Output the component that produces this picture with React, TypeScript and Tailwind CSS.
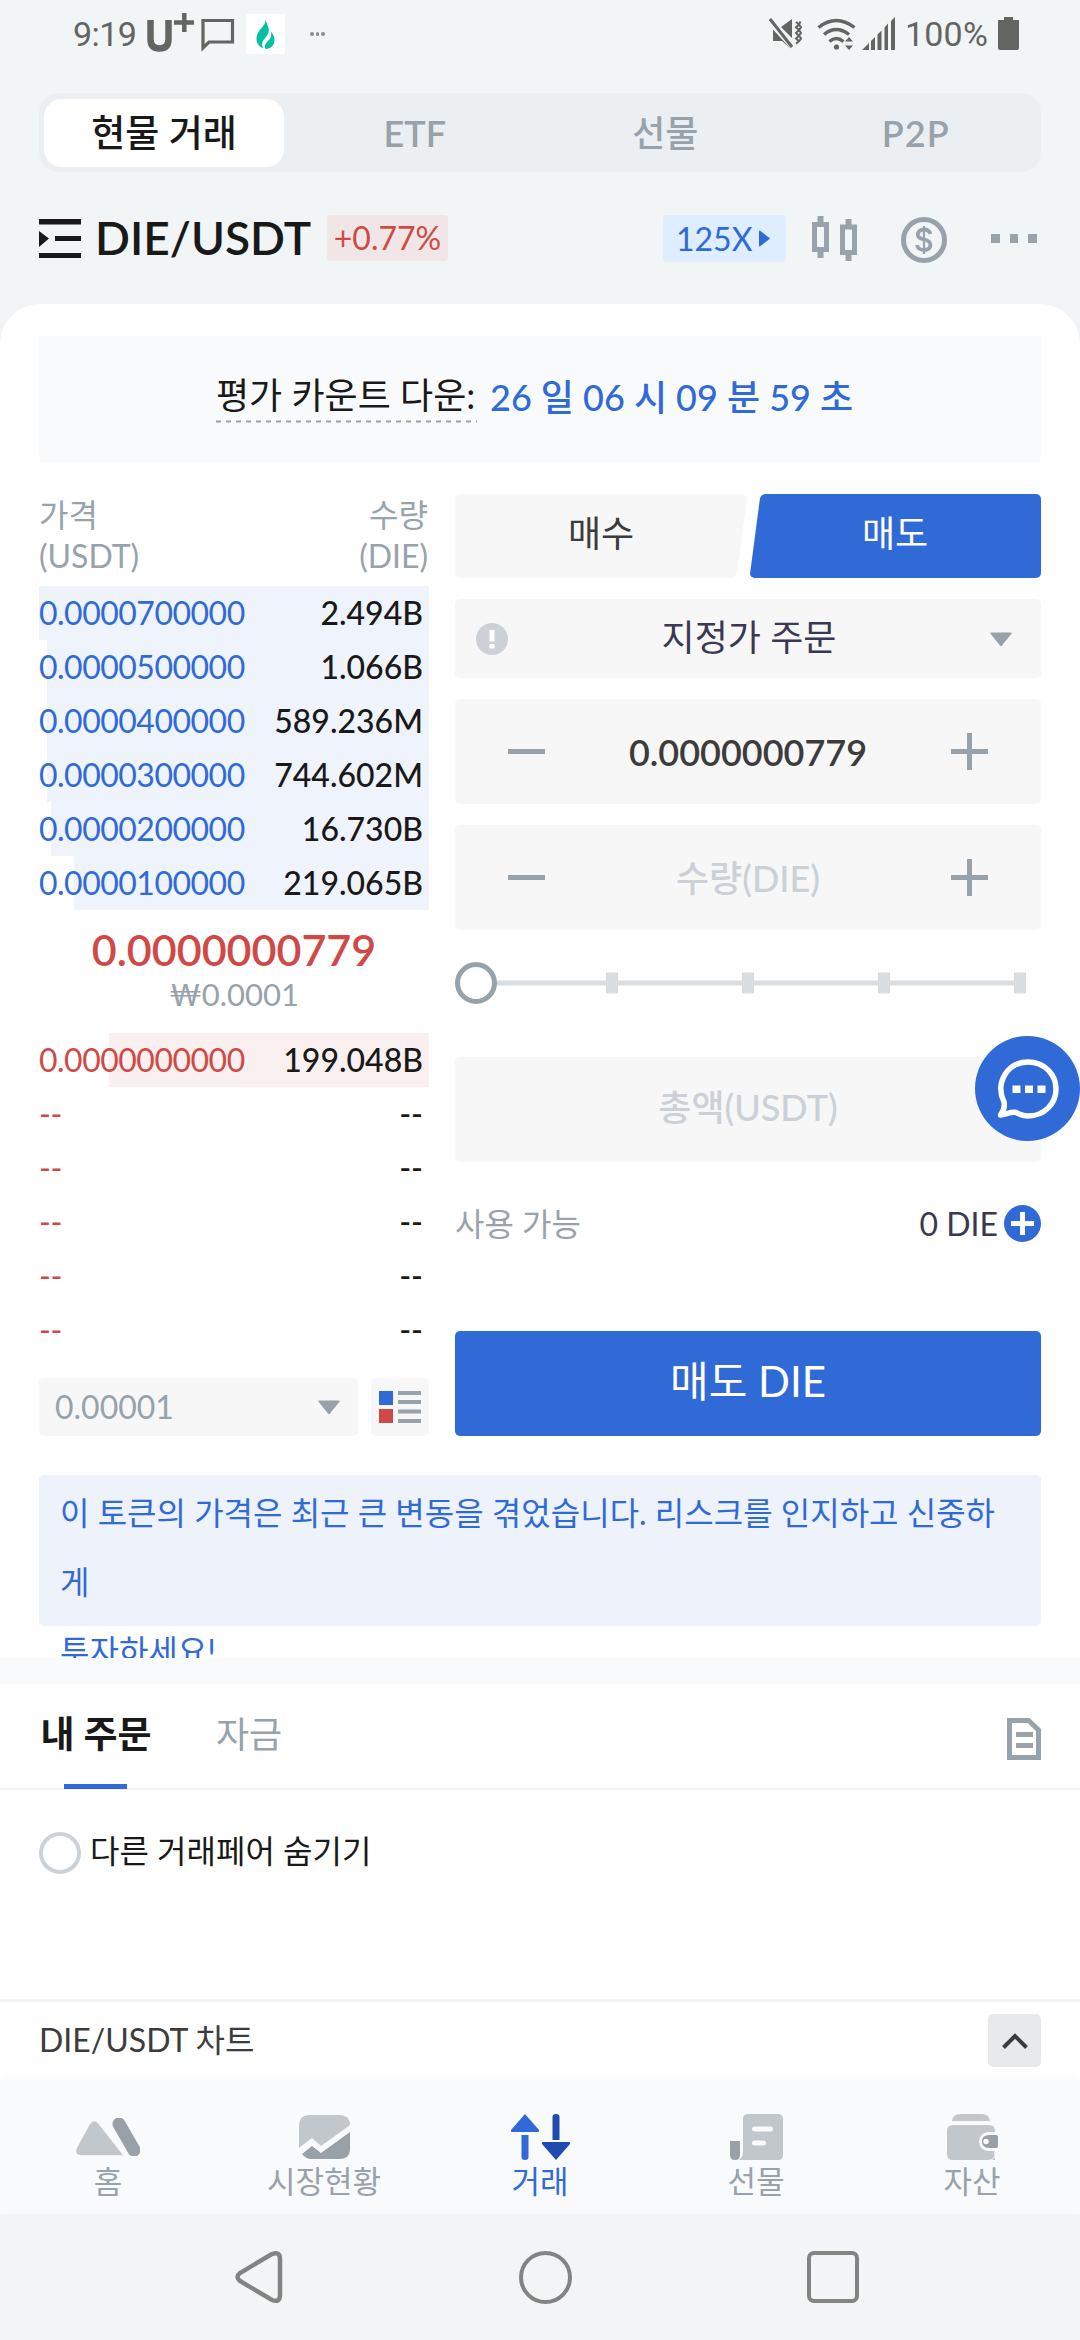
import React from 'react';

interface BookRow {
  price: string;
  amount: string;
  left: number;
}

const asks: BookRow[] = [
  { price: '0.0000700000', amount: '2.494B', left: 0 },
  { price: '0.0000500000', amount: '1.066B', left: 8 },
  { price: '0.0000400000', amount: '589.236M', left: 8 },
  { price: '0.0000300000', amount: '744.602M', left: 8 },
  { price: '0.0000200000', amount: '16.730B', left: 12 },
  { price: '0.0000100000', amount: '219.065B', left: 35 },
];

const bids: BookRow[] = [
  { price: '0.0000000000', amount: '199.048B', left: 70 },
  { price: '--', amount: '--', left: 390 },
  { price: '--', amount: '--', left: 390 },
  { price: '--', amount: '--', left: 390 },
  { price: '--', amount: '--', left: 390 },
  { price: '--', amount: '--', left: 390 },
];

const StatusBar: React.FC = () => (
  <div className="flex h-[93px] items-start justify-between pl-[73px] pr-[61px] pt-3 font-['Roboto',sans-serif] text-[34px] leading-[44px] text-[#636563]">
    <div className="flex items-start">
      <span className="w-[74px] tracking-[-0.6px]">9:19</span>
      <svg width="48" height="44" viewBox="0 0 48 44" fill="none" stroke="#636563">
        <path d="M3.5 8v19q0 9.500 9 9.500t9-9.500V8" strokeWidth="6.500" />
        <path d="M27 10.500h20M37.300 1v19" strokeWidth="4.500" />
      </svg>
      <svg className="ml-[6px]" width="34" height="44" viewBox="0 0 34 44" fill="none" stroke="#636563" strokeWidth="3.200">
        <path d="M2 8.500h29.500v21.500H8l-6 6z" />
      </svg>
      <div className="ml-[11px] mt-[2px] flex h-10 w-[39px] items-center justify-center bg-white">
        <svg width="19" height="29" viewBox="0 0 19 29" fill="#00c2a2">
          <path d="M9.500 0C10 6 1 10 .5 18c-.3 5 2.500 8.500 6.500 10.200C5 23 7 20 10 17c2.500-3 4-7 1.500-11.500C11 3.500 10.200 1.500 9.500 0z" />
          <path d="M15 11.500c1 5-1 8-4 10.500-2 2-2.600 4.500-1.600 7C15 28.800 18.500 25 18.500 20c0-3.500-1.500-6-3.500-8.500z" />
        </svg>
      </div>
      <div className="ml-[25px] mt-[20px] flex gap-[2px]">
        <i className="size-[3.500px] rounded-full bg-[#8a8c8b]" />
        <i className="size-[3.500px] rounded-full bg-[#8a8c8b]" />
        <i className="size-[3.500px] rounded-full bg-[#8a8c8b]" />
      </div>
    </div>
    <div className="flex items-start">
      <svg width="34" height="44" viewBox="0 0 34 44" fill="#636563">
        <path d="M4 17.500v11.500h9L22 37zM12 15l11-8v19z" />
        <path d="M1 7l22 28" stroke="#636563" strokeWidth="3" />
        <path d="M27 10l3 2.500-3 2.800 3 2.800-3 2.800 3 2.800-3 2.800 3 2.800-3 2.500M31.500 9.500l-1.500 3 2 2.800-2 2.800 2 2.800-2 2.800 2 2.800-2 2.800" fill="none" stroke="#636563" strokeWidth="2" />
      </svg>
      <svg className="ml-[14px]" width="40" height="44" viewBox="0 0 40 44" fill="none" stroke="#636563" strokeWidth="3.400">
        <path d="M1.500 15.500q17.500-14 36 0M7 22.500q12-10 25 0M12.500 29.500q6.500-6 14 0" />
        <circle cx="19.500" cy="35" r="2.600" fill="#636563" stroke="none" />
        <path d="M28 29.500l4-4.500 4 4.500zM28 33.500l4 4.500 4-4.500z" fill="#636563" stroke="none" />
      </svg>
      <svg className="ml-[5px]" width="34" height="44" viewBox="0 0 34 44" fill="#636563">
        <path d="M0 38l7-7v7zM9 29l4-4v13H9zM15.500 22.500l4-4V38h-4zM22.500 15.500l3.500-4V38h-3.500zM29 9l4-4v33h-4z" />
      </svg>
      <span className="ml-[9px] w-[93px] tracking-[0.2px]">100%</span>
      <svg width="21" height="44" viewBox="0 0 21 44" fill="#636563">
        <path d="M6 5h9v3h6v28q0 2-2 2H2q-2 0-2-2V8h6z" />
      </svg>
    </div>
  </div>
);

const MarketTabs: React.FC = () => (
  <div className="mx-[39px] grid h-[79px] grid-cols-4 items-center rounded-[20px] bg-[#ebeff2] text-center text-[36px] font-semibold leading-[68px] text-[#98a2ab]">
    <div className="ml-[5px] h-[68px] w-[240px] rounded-[18px] bg-white text-[37px] font-medium text-[#191919]">현물 거래</div>
    <div>ETF</div>
    <div className="font-medium">선물</div>
    <div className="tracking-[1px]">P2P</div>
  </div>
);

const PairHeader: React.FC = () => (
  <div className="flex h-[132px] items-start px-[39px] pt-[43px]">
    <svg className="mt-1" width="42" height="40" viewBox="0 0 42 40" fill="#191919">
      <path d="M0 0h42v5.500H0zM16 17h26v5H16zM0 34h42v5H0zM0 12l10 7.500L0 28z" />
    </svg>
    <h1 className="ml-[14px] w-[232px] whitespace-nowrap text-[46px] font-semibold leading-[46px] tracking-[0px] text-[#191919]">DIE/USDT</h1>
    <div className="h-[46px] w-[121px] rounded bg-[#f0e6e6] text-center text-[32px] leading-[46px] text-[#cf4a46]">+0.77%</div>
    <div className="ml-[215px] flex h-[47px] w-[123px] items-center rounded bg-[#deedff] pl-[13px] text-[32px] leading-[46px] text-[#306ad6]">
      <span className="w-[83px]">125X</span>
      <svg width="11" height="17" viewBox="0 0 11 17" fill="currentColor">
        <path d="M0 1.500Q0 0 1.500 1l9 7q.6.500 0 1l-9 7Q0 17 0 15.500z" />
      </svg>
    </div>
    <svg className="ml-[26px] mt-[1px]" width="46" height="46" viewBox="0 0 46 46" fill="none" stroke="#98a2ab" strokeWidth="5">
      <path d="M2.500 8.500h12v25h-12zM30.500 11h12v25.500h-12z" />
      <path d="M8.500 0v7M8.500 35v7M36.500 3v7M36.500 38v7" strokeWidth="6" />
    </svg>
    <svg className="ml-[43px] mt-[2px]" width="46" height="46" viewBox="0 0 46 46" fill="none" stroke="#98a2ab">
      <circle cx="23" cy="23" r="20.500" strokeWidth="5" />
      <path d="M29.500 17q-1.500-4.500-6.500-4.500t-6.300 4.700q0 4 6.300 5.300t6.500 5.500q-.5 5-6.500 5t-7-5" strokeWidth="3.800" />
      <path d="M23 9v28" strokeWidth="2.200" />
    </svg>
    <div className="ml-[44px] mt-[19px] flex gap-[10px]">
      <i className="size-[8.500px] bg-[#98a2ab]" />
      <i className="size-[8.500px] bg-[#98a2ab]" />
      <i className="size-[8.500px] bg-[#98a2ab]" />
    </div>
  </div>
);

const Countdown: React.FC = () => (
  <div className="mx-[39px] mt-8 flex h-[126px] justify-center rounded bg-[#f9fafc] pt-[34px] text-[36px] leading-[50px]">
    <div className="h-[52px] w-[261px] whitespace-nowrap text-[#191919]">
      평가 카운트 다운:
      <svg className="block" width="261" height="3" viewBox="0 0 261 3">
        <path d="M0 1.500h261" stroke="#98a2ab" strokeWidth="2" strokeDasharray="5 5" />
      </svg>
    </div>
    <div className="ml-[13px] mt-[2px] w-[374px] whitespace-nowrap font-medium text-[#306ad6]">26 일 06 시 09 분 59 초</div>
  </div>
);

const OrderBookRow: React.FC<{ row: BookRow; side: 'ask' | 'bid' }> = ({ row, side }) => (
  <div className="relative flex h-[54px] justify-between pr-[6px] text-[32px] leading-[54px]">
    <div
      className={side === 'ask' ? 'absolute inset-y-0 right-0 bg-[#eff3fc]' : 'absolute inset-y-0 right-0 bg-[#fbf0f0]'}
      style={{ left: row.left }}
    />
    <span className={side === 'ask' ? 'relative tracking-[-0.5px] text-[#306ad6]' : 'relative tracking-[-0.5px] text-[#cf4a46]'}>
      {row.price}
    </span>
    <span className="relative font-medium text-[#191919]">{row.amount}</span>
  </div>
);

const OrderBook: React.FC = () => (
  <div className="w-[390px]">
    <div className="flex h-[92px] justify-between pr-[1px] text-[32px] leading-[41px] text-[#98a2ab]">
      <div>가격<br />(USDT)</div>
      <div className="text-right">수량<br />(DIE)</div>
    </div>
    {asks.map((row) => (
      <OrderBookRow key={row.price} row={row} side="ask" />
    ))}
    <div className="flex h-[123px] flex-col items-center pt-[14px]">
      <div className="text-[43px] font-semibold leading-[52px] text-[#cf4a46]">0.0000000779</div>
      <div className="text-[31px] leading-9 text-[#98a2ab]">₩0.0001</div>
    </div>
    {bids.map((row, index) => (
      <OrderBookRow key={index} row={row} side="bid" />
    ))}
    <div className="mt-[21px] flex h-[58px] gap-[13px]">
      <div className="flex w-[319px] items-center justify-between rounded-[5px] bg-[#f7f7f7] pl-4 pr-[18px] text-[32px] leading-[54px] text-[#98a2ab]">
        0.00001
        <Caret />
      </div>
      <div className="flex w-[58px] items-center justify-center rounded-[5px] bg-[#f7f7f7]">
        <svg width="42" height="32" viewBox="0 0 42 32">
          <path d="M0 0h14v14H0z" fill="#306ad6" />
          <path d="M0 18h14v14H0z" fill="#cf4a46" />
          <path d="M19 0h23v4H19zM19 9h23v4H19zM19 18.500h23v4H19zM19 28h23v4H19z" fill="#98a2ab" />
        </svg>
      </div>
    </div>
  </div>
);

const Caret: React.FC = () => (
  <svg width="22" height="16" viewBox="0 0 22 16" fill="#98a2ab">
    <path d="M1 1.500h20q1.200 0 .5 1.200L12 14.500q-1 1-2 0L.5 2.700Q0 1.500 1 1.500z" />
  </svg>
);

const Stepper: React.FC<{ children: React.ReactNode; className: string }> = ({ children, className }) => (
  <div className="mt-[21px] flex h-[105px] items-center justify-between rounded-[5px] bg-[#f7f7f7] px-[53px]">
    <svg width="37" height="37" viewBox="0 0 37 37" stroke="#98a2ab" strokeWidth="5">
      <path d="M0 18.500h37" />
    </svg>
    <span className={className}>{children}</span>
    <svg width="37" height="37" viewBox="0 0 37 37" stroke="#98a2ab" strokeWidth="5">
      <path d="M0 18.500h37M18.500 0v37" />
    </svg>
  </div>
);

const OrderForm: React.FC = () => (
  <div className="w-[586px]">
    <div className="flex h-[84px] justify-between text-center text-[36px] leading-[78px]">
      <div className="relative w-[292px] overflow-hidden rounded-[5px]">
        <div className="absolute inset-y-0 -left-5 right-[5.500px] -skew-x-[7.500deg] rounded-[5px] bg-[#f7f7f7]" />
        <span className="relative text-[#3c3c3c]">매수</span>
      </div>
      <div className="relative w-[292px] overflow-hidden rounded-[5px]">
        <div className="absolute inset-y-0 -right-5 left-[5.500px] -skew-x-[7.500deg] rounded-[5px] bg-[#306ad6]" />
        <span className="relative text-white">매도</span>
      </div>
    </div>
    <div className="mt-[21px] flex h-[79px] items-center justify-between rounded-[5px] bg-[#f7f7f7] pl-[21px] pr-[29px]">
      <svg width="32" height="32" viewBox="0 0 32 32">
        <circle cx="16" cy="16" r="16" fill="#cbd1d6" />
        <path d="M13.500 7h5v11.500h-5zM13.500 21h5v4.500h-5z" fill="#fff" />
      </svg>
      <span className="pb-1 text-[36px] leading-[70px] text-[#3b3853]">지정가 주문</span>
      <Caret />
    </div>
    <Stepper className="text-[36px] font-semibold text-[#3c3c3c]">0.0000000779</Stepper>
    <Stepper className="text-[36px] font-medium text-[#cbd1d6]">수량(DIE)</Stepper>
    <svg className="mt-8 block" width="586" height="42" viewBox="0 0 586 42" fill="#dadde0">
      <path d="M40 18.500h531v5H40zM151 10.500h12v21h-12zM287 10.500h12v21h-12zM423 10.500h12v21h-12zM559 10.500h12v21h-12z" />
      <circle cx="21" cy="21" r="18.500" fill="#fff" stroke="#98a2ab" strokeWidth="5" />
    </svg>
    <div className="mt-[53px] h-[105px] rounded-[5px] bg-[#f7f7f7] text-center text-[36px] font-medium leading-[101px] text-[#cbd1d6]">
      총액(USDT)
    </div>
    <div className="mt-[41px] flex h-[41px] items-center text-[32px] leading-[41px] text-[#98a2ab]">
      <span className="flex-1">사용 가능</span>
      <span className="mr-[6px] text-[#3b3853]">0 DIE</span>
      <svg width="37" height="37" viewBox="0 0 37 37">
        <circle cx="18.500" cy="18.500" r="18.500" fill="#306ad6" />
        <path d="M7 18.500h23M18.500 7v23" stroke="#fff" strokeWidth="5" />
      </svg>
    </div>
    <div className="mt-[87px] h-[105px] rounded-[5px] bg-[#306ad6] text-center text-[42px] leading-[101px] text-white">매도 DIE</div>
  </div>
);

const Orders: React.FC = () => (
  <>
    <div className="mt-8 h-[26px] bg-[#f9fafc]" />
    <div className="flex h-[106px] items-start border-b-2 border-[#f0f1f2] px-[39px] text-[37px] leading-[100px]">
      <div className="relative w-[114px] text-center font-bold text-[#191919]">
        내 주문
        <i className="absolute left-[25px] top-[100px] h-[5px] w-[63px] bg-[#306ad6]" />
      </div>
      <div className="ml-[63px] flex-1 text-[36px] text-[#98a2ab]">자금</div>
      <svg className="mt-[34px]" width="34" height="42" viewBox="0 0 34 42" fill="none" stroke="#98a2ab" strokeWidth="5">
        <path d="M2.500 2.500h19L31.500 12v27.500h-29zM9 16.500h17M9 27.500h17" />
      </svg>
    </div>
    <div className="flex h-[209px] items-start px-[39px] pt-[42px] text-[32px] leading-[38px] text-[#191919]">
      <i className="mr-[9px] size-[42px] rounded-full border-4 border-[#cbd1d6]" />
      다른 거래페어 숨기기
    </div>
    <div className="flex h-[81px] items-start justify-between border-t-[3px] border-[#f3f3f4] px-[39px] pt-3 text-[32px] leading-[51px] text-[#3c3c3c]">
      DIE/USDT 차트
      <div className="flex size-[53px] items-center justify-center rounded-[5px] bg-[#e8e9eb]">
        <svg width="26" height="16" viewBox="0 0 26 16" fill="none" stroke="#3c3c3c" strokeWidth="4">
          <path d="M1.500 14.500L13 3l11.500 11.500" />
        </svg>
      </div>
    </div>
  </>
);

const navItems = [
  {
    label: '홈',
    icon: (
      <>
        <path d="M15 9q5-9 10 0l26 42H6q-8 0-5-10z" transform="scale(.92 .73)" fill="#c2c7cb" />
        <path d="M43 6l15 26" stroke="#9aa0a7" strokeWidth="13" strokeLinecap="round" />
      </>
    ),
    viewBox: '0 0 64 38',
    width: 64,
    height: 38,
  },
  {
    label: '시장현황',
    icon: (
      <>
        <path d="M0 33V11Q0 0 11 0h29q11 0 11 10L22 31l-9-8z" fill="#c2c7cb" />
        <path d="M3 39l10-8 9 7 29-21v17q0 10-11 10H12q-5 0-9-5z" fill="#9aa0a7" />
      </>
    ),
    viewBox: '0 0 51 44',
    width: 51,
    height: 44,
  },
  {
    label: '거래',
    icon: (
      <>
        <path d="M14 0l14 16q.5 2-1 2H1q-1.500 0-1-2zM10.500 21h7v22q0 3-3.500 3t-3.500-3z" fill="#306ad6" />
        <path d="M45 46l14-16q.5-2-1-2H32q-1.500 0-1 2zM41.500 26h7V3q0-3-3.500-3t-3.500 3z" fill="#1f4bb0" />
      </>
    ),
    viewBox: '0 0 59 46',
    width: 59,
    height: 46,
  },
  {
    label: '선물',
    icon: (
      <>
        <path d="M13 5q0-5 5-5h30q5 0 5 5v36q0 5-5 5H9q4-3 4-8z" fill="#c2c7cb" />
        <path d="M0 27h10v14q0 5-5 5t-5-5z" fill="#9aa0a7" />
        <path d="M24.500 15h16M24.500 29h9" stroke="#f9fafc" strokeWidth="5" strokeLinecap="round" />
      </>
    ),
    viewBox: '0 0 53 46',
    width: 53,
    height: 46,
  },
  {
    label: '자산',
    icon: (
      <>
        <path d="M5 7q1-7 8-7h22q7 0 8 7zM0 17q0-6 6-6h36q6 0 6 6v29H6q-6 0-6-6z" fill="#c2c7cb" />
        <path d="M48 37v3q0 6-6 6" stroke="#f9fafc" fill="none" />
        <rect x="32" y="18" width="24" height="19" rx="9.500" fill="#f9fafc" />
        <path d="M42 21h7q2 0 2 2v9q0 2-2 2h-7q-7 0-7-6.500t7-6.500z" fill="#9aa0a7" />
        <circle cx="39" cy="27.500" r="2.700" fill="#fff" />
      </>
    ),
    viewBox: '0 0 51 46',
    width: 51,
    height: 46,
  },
];

const BottomNav: React.FC = () => (
  <nav className="grid h-[134px] grid-cols-5 bg-[#f9fafc] shadow-[0_-2px_6px_rgba(0,0,0,0.03)]">
    {navItems.map((item, index) => (
      <div
        key={item.label}
        className={
          index === 2
            ? 'flex flex-col items-center pt-[32px] text-[31px] leading-[38px] text-[#306ad6]'
            : 'flex flex-col items-center pt-[32px] text-[31px] leading-[38px] text-[#98a2ab]'
        }
      >
        <div className="flex h-[50px] items-center">
          <svg width={item.width} height={item.height} viewBox={item.viewBox}>
            {item.icon}
          </svg>
        </div>
        <span>{item.label}</span>
      </div>
    ))}
  </nav>
);

const SystemNav: React.FC = () => (
  <div className="flex h-[126px] items-center justify-between pl-[235px] pr-[221px]">
    <svg width="48" height="54" viewBox="0 0 48 54" fill="none" stroke="#828482" strokeWidth="4.500">
      <path d="M37 4L5 23q-5 4 0 8l32 19q8 3 8-5V9q0-8-8-5z" />
    </svg>
    <i className="size-[53px] rounded-full border-[4.500px] border-[#828482]" />
    <i className="size-[52px] rounded-[7px] border-[4.500px] border-[#828482]" />
  </div>
);

const App: React.FC = () => {
  return (
    <div className="relative flex h-[2340px] w-[1080px] flex-col overflow-hidden bg-[#f1f5f6] font-['Lato','Noto_Sans_CJK_KR',sans-serif]">
      <StatusBar />
      <MarketTabs />
      <PairHeader />
      <main className="flex h-[1776px] flex-col rounded-t-[40px] bg-white">
        <Countdown />
        <div className="mx-[39px] mt-8 flex h-[942px] justify-between">
          <OrderBook />
          <OrderForm />
        </div>
        <div className="mx-[39px] mt-[39px] h-[151px] rounded-[5px] bg-[#edf2fb] px-[21px] pt-[3px] text-[32px] leading-[69px] text-[#306ad6]">
          이 토큰의 가격은 최근 큰 변동을 겪었습니다. 리스크를 인지하고 신중하게<br />투자하세요!
        </div>
        <Orders />
      </main>
      <BottomNav />
      <SystemNav />

      {/* Floating support chat button */}
      <button className="absolute right-0 top-[1036px] flex size-[105px] items-center justify-center rounded-full bg-[#306ad6]">
        <svg width="62" height="60" viewBox="0 0 62 60" fill="none" stroke="#fff" strokeWidth="5.500" strokeLinejoin="round">
          <path d="M3.500 56q5-7 3.500-13C-2 24 10 3 31 3c16 0 28 12 28 27S47 57 31 57c-5 0-9-2-12-3.500-5-1-10 2-15.500 2.500z" />
          <path d="M15.500 26.500h8v7.500h-8zM28 26.500h8v7.500h-8zM40.500 26.500h8v7.500h-8z" fill="#fff" stroke="none" />
        </svg>
      </button>
    </div>
  );
};

export default App;
